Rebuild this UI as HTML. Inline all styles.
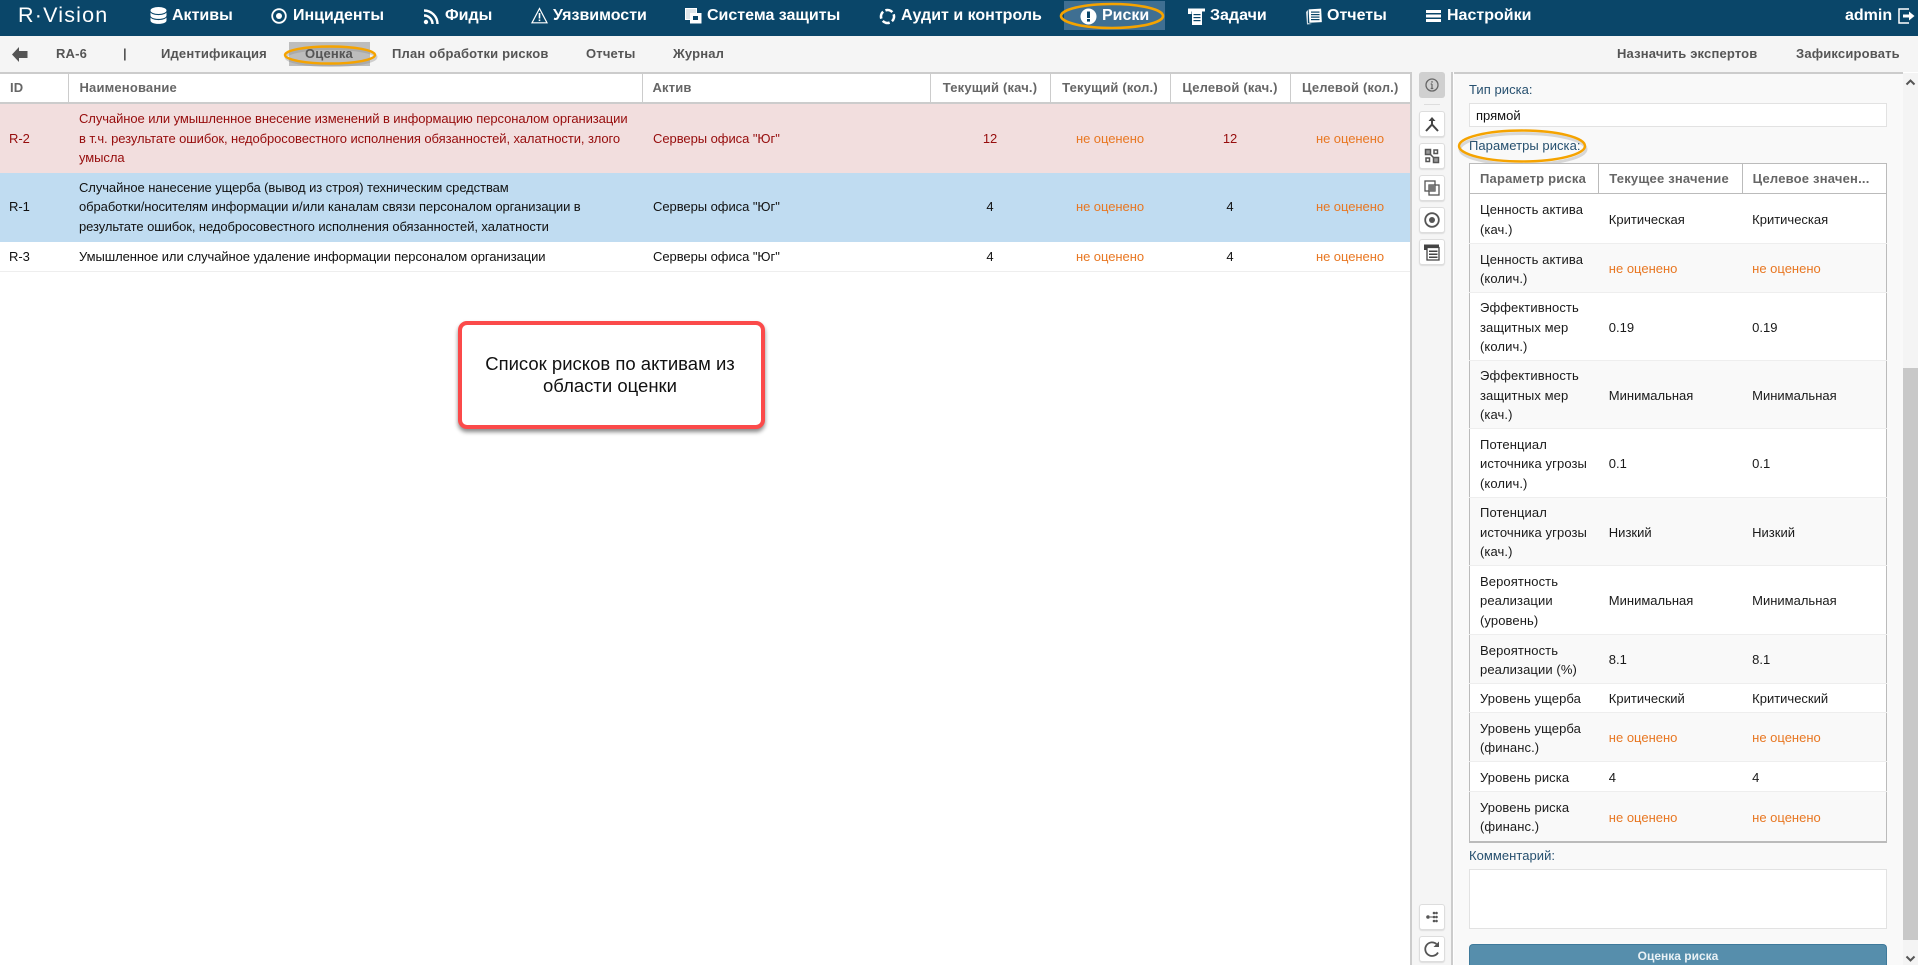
<!DOCTYPE html>
<html lang="ru">
<head>
<meta charset="utf-8">
<title>RVision</title>
<style>
html,body{margin:0;padding:0;width:1918px;height:965px;overflow:hidden;background:#fff;font-family:"Liberation Sans",Arial,sans-serif;font-size:13px;color:#111}
*{box-sizing:border-box}
.a{position:absolute;white-space:nowrap}
#hdr{position:absolute;left:0;top:0;width:1918px;height:36px;background:#0a4669}
.n{position:absolute;top:7px;font-weight:bold;font-size:16px;line-height:18px;color:#fff;white-space:nowrap}
.i{position:absolute;top:7px}
#sub{position:absolute;left:0;top:36px;width:1918px;height:36px;background:#f5f5f5}
.s{position:absolute;top:46px;line-height:16px;font-weight:bold;color:#555;white-space:nowrap;letter-spacing:.17px}
table{border-collapse:collapse;table-layout:fixed}
#main{position:absolute;left:0;top:72px;width:1410px}
#main th{height:30px;border-top:2px solid #ccc;border-bottom:2px solid #ccc;border-left:1px solid #ccc;font-weight:bold;color:#666;text-align:center;padding:0 0 2px;letter-spacing:.17px;background:#fff}
#main th:first-child{border-left:0}
#main th.l{text-align:left;padding-left:10px}
#main td{padding:5px 10px;line-height:19.5px;letter-spacing:-.05px;text-align:center}
#main td.l{text-align:left}
#main td.nm{padding-left:11px;padding-right:8px;letter-spacing:-.08px}
#main td.as{padding-left:11px}
.red td{background:#f2dede;color:#960c0c}
.blu td{background:#c0dcf1}
.wht td{border-bottom:1px solid #eee}
.o{color:#e87722!important}
#tb{position:absolute;left:1410px;top:72px;width:43px;height:893px;background:#f5f5f5;border-left:2px solid #ccc;border-right:2px solid #ccc}
.b{position:absolute;left:1419px;width:26px;height:26px;background:#fff;border:1px solid #ddd;border-radius:3px;box-shadow:0 1px 1px #ddd}
.b svg{position:absolute;left:3px;top:3px}
#pan{position:absolute;left:1454px;top:72px;width:449px;height:893px;background:#f9f9f9;border-top:2px solid #ccc}
.lab{position:absolute;left:1469px;color:#27506f;line-height:16px;letter-spacing:.05px;white-space:nowrap}
.inp{position:absolute;left:1469px;width:418px;background:#fff;border:1px solid #e2e2e2}
#par{position:absolute;left:1469px;top:163px;width:418px;border:1px solid #bbb;border-bottom:2px solid #bbb;background:#fff}
#par th{height:30px;padding:0 0 0 10px;text-align:left;color:#666;font-weight:bold;background:#fff;border-left:1px solid #bbb;border-bottom:1px solid #bbb;letter-spacing:.2px;white-space:nowrap;overflow:hidden}
#par th:first-child{border-left:0}
#par td{padding:2px 10px 0;line-height:19.5px;border-bottom:1px solid #eee;color:#1a1a1a}
#par td:first-child{padding-right:4px;letter-spacing:.1px}
#par tr:nth-child(odd) td{background:#f9f9f9}
#sb{position:absolute;left:1903px;top:73px;width:15px;height:892px;background:#f4f4f4}
#th{position:absolute;left:1903px;top:368px;width:15px;height:572px;background:#c8c8c8}
#btn{position:absolute;left:1469px;top:944px;width:418px;height:21px;background:#568eac;border:1px solid #3f7a9b;border-bottom:0;border-radius:4px 4px 0 0;color:#e9f1f5;font-weight:bold;font-size:12px;text-align:center;line-height:22px}
#call{position:absolute;left:458px;top:321px;width:307px;height:108px;background:#fff;border:4px solid #fb4a4a;border-radius:9px;box-shadow:0 3px 4px #888;font-size:18.5px;line-height:21.5px;text-align:center;color:#111;padding:28px 3px 0 0}
svg.e{position:absolute;overflow:visible}
</style>
</head>
<body>
<div id="hdr"></div>
<div class="a" style="left:18px;top:1px;font-size:21.5px;line-height:28px;color:#fff;letter-spacing:1.2px">R·Vision</div>

<svg class="i" style="left:150px" width="17" height="20" viewBox="0 0 17 20" fill="#fff"><ellipse cx="8.500" cy="3.500" rx="8" ry="3.500"/><path d="M.5 5.500v3c0 2 3.600 3.400 8 3.400s8-1.400 8-3.400v-3c-1.400 1.700-4.500 2.600-8 2.600s-6.600-.9-8-2.600z"/><path d="M.5 10.500v3c0 2 3.600 3.400 8 3.400s8-1.400 8-3.400v-3c-1.400 1.700-4.500 2.600-8 2.600s-6.600-.9-8-2.600z"/></svg>
<div class="n" style="left:172px">Активы</div>
<svg class="i" style="left:271px;top:8px" width="16" height="16" viewBox="0 0 16 16"><circle cx="8" cy="8" r="6.800" fill="none" stroke="#fff" stroke-width="1.800"/><circle cx="8" cy="8" r="3" fill="#fff"/></svg>
<div class="n" style="left:293px">Инциденты</div>
<svg class="i" style="left:423px;top:9px" width="16" height="16" viewBox="0 0 16 16" fill="none" stroke="#fff" stroke-width="2.400"><circle cx="3" cy="13" r="2.200" fill="#fff" stroke="none"/><path d="M1 6.500a8.500 8.500 0 0 1 8.500 8.500"/><path d="M1 1.500a13.500 13.500 0 0 1 13.500 13.500"/></svg>
<div class="n" style="left:445px">Фиды</div>
<svg class="i" style="left:531px" width="17" height="17" viewBox="0 0 17 17" fill="none" stroke="#fff" stroke-width="1.200"><path d="M8.500 1.500 16 15.800H1z"/><path d="M8.500 6v5.500" stroke-width="1.600"/><path d="M8.500 12.500v1.600" stroke-width="1.600"/></svg>
<div class="n" style="left:553px">Уязвимости</div>
<svg class="i" style="left:685px;top:8px" width="17" height="16" viewBox="0 0 17 16"><rect x=".5" y=".5" width="11" height="11" fill="#dfe6ea" stroke="#fff"/><rect x="5" y="5" width="11.500" height="10.500" fill="#fff"/><rect x="8" y="8" width="5" height="4" fill="#0a4669"/></svg>
<div class="n" style="left:707px">Система защиты</div>
<svg class="i" style="left:879px;top:8px" width="17" height="17" viewBox="0 0 17 17" fill="none" stroke="#fff" stroke-width="2.600"><circle cx="8.500" cy="8.500" r="6.500" stroke-dasharray="7.500 2.700" transform="rotate(-20 8.500 8.500)"/></svg>
<div class="n" style="left:901px">Аудит и контроль</div>

<div class="a" style="left:1064px;top:1px;width:101px;height:29px;background:#3f6f92"></div>
<svg class="i" style="left:1080px;top:8px" width="17" height="17" viewBox="0 0 17 17"><circle cx="8.500" cy="8.500" r="8" fill="#fff"/><rect x="7" y="3.500" width="3" height="6.500" fill="#0a4669"/><rect x="7" y="11" width="3" height="2.600" fill="#0a4669"/></svg>
<div class="n" style="left:1102px">Риски</div>
<svg class="e" style="left:1058px;top:1px" width="108" height="30"><ellipse cx="54" cy="15" rx="51" ry="12" fill="none" stroke="#f5a300" stroke-width="2.600"/></svg>

<svg class="i" style="left:1188px;top:8px" width="17" height="17" viewBox="0 0 17 17" fill="#fff"><path d="M0 .5h17v3H3.500v2.500H0z"/><rect x="4" y="3" width="10" height="14"/><g fill="#0a4669"><rect x="5.500" y="6" width="7" height="1.200"/><rect x="5.500" y="9" width="7" height="1.200"/><rect x="5.500" y="12" width="7" height="1.200"/></g></svg>
<div class="n" style="left:1210px">Задачи</div>
<svg class="i" style="left:1305px;top:8px" width="17" height="17" viewBox="0 0 17 17"><path d="M1 4 3 2v13l4 1-5 .5z" fill="#cfdbe3"/><rect x="4" y="1" width="12.500" height="13.500" fill="#fff" transform="rotate(-3 10 8)"/><g fill="#0a4669"><rect x="6" y="3.500" width="8.500" height="1.200"/><rect x="6" y="6" width="8.500" height="1.200"/><rect x="6" y="8.500" width="8.500" height="1.200"/><rect x="6" y="11" width="8.500" height="1.200"/></g></svg>
<div class="n" style="left:1327px">Отчеты</div>
<svg class="i" style="left:1426px;top:10px" width="15" height="12" viewBox="0 0 15 12" fill="#fff"><rect width="15" height="3"/><rect y="4.500" width="15" height="3"/><rect y="9" width="15" height="3"/></svg>
<div class="n" style="left:1447px">Настройки</div>
<div class="n" style="left:1845px">admin</div>
<svg class="i" style="left:1898px;top:8px" width="17" height="16" viewBox="0 0 17 16" fill="none" stroke="#fff" stroke-width="1.500"><path d="M11 1H1v14h10"/><path d="M5 8h7" stroke-width="3"/><path d="M11 3.500 16.500 8 11 12.500z" fill="#fff" stroke="none"/></svg>

<div id="sub"></div>
<svg class="a" style="left:12px;top:47px" width="16" height="15" viewBox="0 0 16 15"><path d="M0 7.500 7 0v4h8.500v7H7v4z" fill="#555"/></svg>
<div class="s" style="left:56px">RA-6</div>
<div class="s" style="left:123px">|</div>
<div class="s" style="left:161px">Идентификация</div>
<div class="a" style="left:289px;top:42px;width:81px;height:24px;background:#bdbdbd"></div>
<svg class="e" style="left:282px;top:44px" width="98" height="24"><ellipse cx="48" cy="11" rx="45" ry="8.500" fill="none" stroke="#888" stroke-width="3" opacity=".35" transform="translate(1 2)"/><ellipse cx="48" cy="11" rx="45" ry="8.500" fill="none" stroke="#f5a300" stroke-width="2.400"/></svg>
<div class="s" style="left:305px">Оценка</div>
<div class="s" style="left:392px">План обработки рисков</div>
<div class="s" style="left:586px">Отчеты</div>
<div class="s" style="left:673px">Журнал</div>
<div class="s" style="left:1617px">Назначить экспертов</div>
<div class="s" style="left:1796px">Зафиксировать</div>

<table id="main">
<colgroup><col style="width:68px"><col style="width:574px"><col style="width:288px"><col style="width:120px"><col style="width:120px"><col style="width:120px"><col style="width:120px"></colgroup>
<tr><th class="l">ID</th><th class="l" style="padding-left:11px">Наименование</th><th class="l">Актив</th><th>Текущий (кач.)</th><th>Текущий (кол.)</th><th>Целевой (кач.)</th><th>Целевой (кол.)</th></tr>
<tr class="red" style="height:69px"><td class="l" style="padding:0 9px">R-2</td><td class="l nm">Случайное или умышленное внесение изменений в информацию персоналом организации в т.ч. результате ошибок, недобросовестного исполнения обязанностей, халатности, злого умысла</td><td class="l as">Серверы офиса "Юг"</td><td>12</td><td class="o">не оценено</td><td>12</td><td class="o">не оценено</td></tr>
<tr class="blu" style="height:69px"><td class="l" style="padding:0 9px">R-1</td><td class="l nm">Случайное нанесение ущерба (вывод из строя) техническим средствам<br>обработки/носителям информации и/или каналам связи персоналом организации в<br>результате ошибок, недобросовестного исполнения обязанностей, халатности</td><td class="l as">Серверы офиса "Юг"</td><td>4</td><td class="o">не оценено</td><td>4</td><td class="o">не оценено</td></tr>
<tr class="wht"><td class="l" style="padding:0 9px">R-3</td><td class="l nm">Умышленное или случайное удаление информации персоналом организации</td><td class="l as">Серверы офиса "Юг"</td><td>4</td><td class="o">не оценено</td><td>4</td><td class="o">не оценено</td></tr>
</table>

<div id="call">Список рисков по активам из<br>области оценки</div>

<div id="tb"></div>
<div class="a" style="left:1419px;top:72px;width:26px;height:26px;background:#d0d0d0;border-radius:3px"></div>
<svg class="a" style="left:1425px;top:78px" width="14" height="14" viewBox="0 0 14 14" fill="none" stroke="#666" stroke-width="1.300"><circle cx="7" cy="7" r="6"/><path d="M7 6v4.500M5.700 10.500h2.600M5.700 6h1.300" stroke-width="1.200"/><path d="M7 3.200v1.400" stroke-width="1.500"/></svg>
<div class="a" style="left:1424px;top:104px;width:16px;height:1px;background:#ddd"></div>
<div class="b" style="top:111px"><svg width="18" height="18" viewBox="0 0 18 18" fill="none" stroke="#444" stroke-width="2"><path d="M9 4v5M3 16l6-6.500 6 6.500"/><path d="M5.500 6 9 2l3.500 4z" fill="#444" stroke="none"/></svg></div>
<div class="b" style="top:143px"><svg width="18" height="18" viewBox="0 0 18 18" fill="none" stroke="#555" stroke-width="1.500"><rect x="2.500" y="2.500" width="5" height="5" fill="#999"/><rect x="10.500" y="10.500" width="5" height="5" fill="#999"/><rect x="11" y="3" width="3.500" height="3.500"/><rect x="3" y="11" width="3.500" height="3.500"/><path d="M7.500 7.500l3 3"/></svg></div>
<div class="b" style="top:175px"><svg width="18" height="18" viewBox="0 0 18 18" fill="none" stroke="#555" stroke-width="1.300"><rect x="2" y="2" width="10" height="10"/><rect x="6" y="6" width="10" height="10"/><rect x="6" y="6" width="6" height="6" fill="#777" stroke="none"/></svg></div>
<div class="b" style="top:207px"><svg width="18" height="18" viewBox="0 0 18 18"><circle cx="9" cy="9" r="6.800" fill="none" stroke="#555" stroke-width="1.800"/><circle cx="9" cy="9" r="3" fill="#555"/></svg></div>
<div class="b" style="top:239px"><svg width="18" height="18" viewBox="0 0 18 18" fill="#444"><path d="M1 1.500h15v3H5v2.500H1z"/><path d="M4 4.500h12v12.500H4z" fill="#fff" stroke="#444" stroke-width="1.300"/><path d="M6 7.500h8.500v1.500H6zM6 10.500h8.500v1.500H6zM6 13.500h8.500v1.500H6z"/></svg></div>
<div class="b" style="top:904px"><svg width="18" height="18" viewBox="0 0 18 18" fill="#555"><circle cx="5" cy="9" r="1.800"/><rect x="7" y="8.500" width="3" height="1"/><circle cx="11" cy="5" r="1.300"/><circle cx="13.500" cy="5" r="1.300"/><circle cx="11" cy="9" r="1.300"/><circle cx="13.500" cy="9" r="1.300"/><circle cx="11" cy="13" r="1.300"/><circle cx="13.500" cy="13" r="1.300"/></svg></div>
<div class="b" style="top:936px"><svg width="18" height="18" viewBox="0 0 18 18" fill="none" stroke="#555" stroke-width="1.800"><path d="M15 12.500A6.800 6.800 0 1 1 13.500 4"/><path d="M16 1.500v5.500h-5.500z" fill="#555" stroke="none"/></svg></div>

<div id="pan"></div>
<div class="lab" style="top:82px">Тип риска:</div>
<div class="inp" style="top:103px;height:24px;line-height:23px;padding-left:6px;color:#111">прямой</div>
<div class="lab" style="top:138px">Параметры риска:</div>
<svg class="e" style="left:1456px;top:126px" width="136" height="40"><ellipse cx="66" cy="21" rx="63" ry="15.500" fill="none" stroke="#888" stroke-width="3" opacity=".3" transform="translate(1 2)"/><ellipse cx="66" cy="20" rx="63" ry="15.500" fill="none" stroke="#f5a300" stroke-width="2.400"/></svg>

<table id="par">
<colgroup><col style="width:129px"><col style="width:143px"><col style="width:144px"></colgroup>
<tr><th>Параметр риска</th><th>Текущее значение</th><th>Целевое значен...</th></tr>
<tr style="height:50px"><td>Ценность актива (кач.)</td><td>Критическая</td><td>Критическая</td></tr>
<tr style="height:49px"><td>Ценность актива (колич.)</td><td class="o">не оценено</td><td class="o">не оценено</td></tr>
<tr style="height:68px"><td>Эффективность защитных мер (колич.)</td><td>0.19</td><td>0.19</td></tr>
<tr style="height:68px"><td>Эффективность защитных мер (кач.)</td><td>Минимальная</td><td>Минимальная</td></tr>
<tr style="height:69px"><td>Потенциал источника угрозы (колич.)</td><td>0.1</td><td>0.1</td></tr>
<tr style="height:68px"><td>Потенциал источника угрозы (кач.)</td><td>Низкий</td><td>Низкий</td></tr>
<tr style="height:69px"><td>Вероятность реализации (уровень)</td><td>Минимальная</td><td>Минимальная</td></tr>
<tr style="height:49px"><td>Вероятность реализации (%)</td><td>8.1</td><td>8.1</td></tr>
<tr style="height:29px"><td>Уровень ущерба</td><td>Критический</td><td>Критический</td></tr>
<tr style="height:49px"><td>Уровень ущерба (финанс.)</td><td class="o">не оценено</td><td class="o">не оценено</td></tr>
<tr style="height:30px"><td>Уровень риска</td><td>4</td><td>4</td></tr>
<tr style="height:50px"><td style="border:0">Уровень риска (финанс.)</td><td class="o" style="border:0">не оценено</td><td class="o" style="border:0">не оценено</td></tr>
</table>

<div class="lab" style="top:848px">Комментарий:</div>
<div class="inp" style="top:869px;height:60px"></div>
<div id="btn">Оценка риска</div>

<div id="sb"></div>
<div id="th"></div>
<svg class="a" style="left:1905px;top:78px" width="11" height="8" viewBox="0 0 11 8"><path d="M1.500 6.500 5.500 2.500l4 4" fill="none" stroke="#555" stroke-width="2"/></svg>
<svg class="a" style="left:1905px;top:955px" width="11" height="8" viewBox="0 0 11 8"><path d="M1.500 1.500 5.500 5.500l4-4" fill="none" stroke="#555" stroke-width="2"/></svg>
</body>
</html>
